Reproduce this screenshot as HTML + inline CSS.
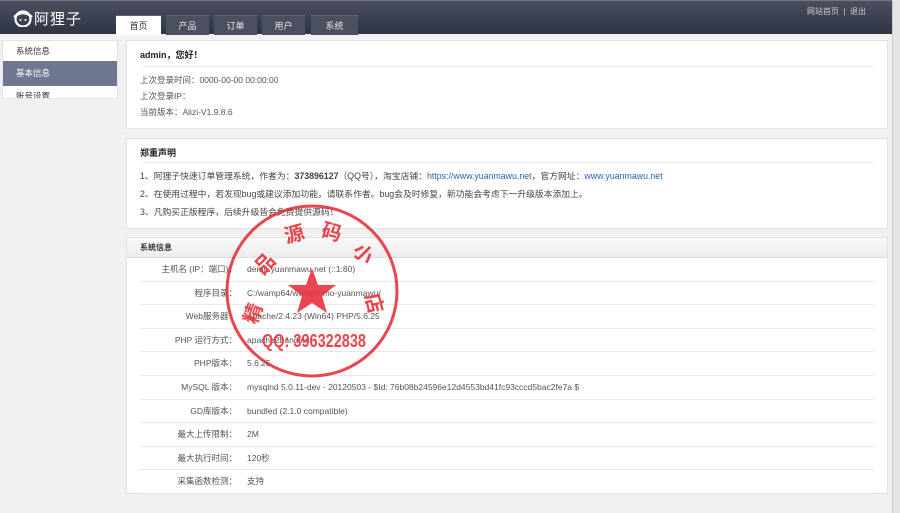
<!DOCTYPE html>
<html><head><meta charset="utf-8"><style>
*{margin:0;padding:0;box-sizing:border-box}
body{width:900px;height:513px;overflow:hidden;background:#f1f1f1;font-family:"Liberation Sans","Noto Sans CJK SC",sans-serif;font-size:8px;color:#444;position:relative}
.hd{position:absolute;left:0;top:0;width:892px;height:34px;background:linear-gradient(#4a5061,#2f3443);border-top:1px solid #777}
.logo{position:absolute;left:12px;top:7px;color:#fff;font-size:15px;letter-spacing:1px}
.tab{position:absolute;top:14px;height:20px;background:#4a5060;color:#e8e8e8;font-size:9px;text-align:center;line-height:20px;border-top:1px solid #666}
.tab.on{background:#fff;color:#333}
.tr{position:absolute;right:26px;top:5px;color:#ccc;font-size:8px}
.sb{position:absolute;right:0;top:0;width:8px;height:513px;background:#e4e4e4;border-left:1px solid #ccc}
.side{position:absolute;left:2px;top:40px;width:116px;height:59px;background:#fff;overflow:hidden;border:1px solid #e4e4e4}
.side div{height:20px;line-height:20px;padding-left:13px;font-size:8.5px;color:#333}
.side .on{background:#6f7890;color:#fff;height:25px;line-height:25px}
.box{position:absolute;left:126px;width:762px;background:#fff;border:1px solid #e2e2e2}
.t{font-weight:bold;font-size:9px;color:#222;margin:0 13px;border-bottom:1px solid #eee;height:26px;line-height:28px}
.p{padding:0 13px;line-height:16px;font-size:8.5px;color:#555}
.p2{padding:0 13px;line-height:18px;font-size:8.8px;color:#444}
a{color:#2a64b8;text-decoration:none}
.sh{height:20px;line-height:20px;padding-left:13px;font-weight:bold;font-size:8px;color:#333;background:linear-gradient(#fafafa,#ececec);border-bottom:1px solid #ddd}
.row{height:23.6px;line-height:23px;margin:0 13px;border-bottom:1px solid #e8e8e8;position:relative;font-size:8.5px;color:#555}
.row .l{position:absolute;left:0;width:97px;text-align:right}
.row .v{position:absolute;left:107px;white-space:nowrap}
</style></head><body>
<div class="hd">
<div class="logo"><svg width="22" height="18" viewBox="0 0 22 18" style="vertical-align:-3px"><circle cx="11" cy="10" r="7.5" fill="none" stroke="#fff" stroke-width="2.2"/><path d="M2 8 Q11 0 20 8" fill="none" stroke="#fff" stroke-width="2.4"/><circle cx="8.5" cy="11" r="1" fill="#fff"/><circle cx="13.5" cy="11" r="1" fill="#fff"/></svg>阿狸子</div>
<div class="tab on" style="left:116px;width:45px">首页</div>
<div class="tab" style="left:166px;width:43px">产品</div>
<div class="tab" style="left:214px;width:43px">订单</div>
<div class="tab" style="left:262px;width:43px">用户</div>
<div class="tab" style="left:311px;width:47px">系统</div>
<div class="tr">网站首页 &nbsp;|&nbsp; 退出</div>
</div>
<div class="sb"></div>
<div class="side"><div>系统信息</div><div class="on">基本信息</div><div>账号设置</div></div>
<div class="box" style="top:40px;height:89px">
<div class="t">admin，您好！</div>
<div class="p" style="padding-top:5px">上次登录时间：0000-00-00 00:00:00<br>上次登录IP：<br>当前版本：Alizi-V1.9.8.6</div>
</div>
<div class="box" style="top:138px;height:91px">
<div class="t" style="height:24px">郑重声明</div>
<div class="p2" style="padding-top:4px">1、阿狸子快速订单管理系统，作者为：<b>373896127</b>（QQ号），淘宝店铺：<a>https://www.yuanmawu.net</a>，官方网址：<a>www.yuanmawu.net</a><br>2、在使用过程中，若发现bug或建议添加功能，请联系作者。bug会及时修复，新功能会考虑下一升级版本添加上。<br>3、凡购买正版程序，后续升级皆会免费提供源码！</div>
</div>
<div class="box" style="top:237px;height:257px">
<div class="sh">系统信息</div>
<div class="row"><span class="l">主机名 (IP：端口)：</span><span class="v">demo.yuanmawu.net (::1:80)</span></div>
<div class="row"><span class="l">程序目录：</span><span class="v">C:/wamp64/www/demo-yuanmawu/</span></div>
<div class="row"><span class="l">Web服务器：</span><span class="v">Apache/2.4.23 (Win64) PHP/5.6.25</span></div>
<div class="row"><span class="l">PHP 运行方式：</span><span class="v">apache2handler</span></div>
<div class="row"><span class="l">PHP版本：</span><span class="v">5.6.25</span></div>
<div class="row"><span class="l">MySQL 版本：</span><span class="v">mysqlnd 5.0.11-dev - 20120503 - $Id: 76b08b24596e12d4553bd41fc93cccd5bac2fe7a $</span></div>
<div class="row"><span class="l">GD库版本：</span><span class="v">bundled (2.1.0 compatible)</span></div>
<div class="row"><span class="l">最大上传限制：</span><span class="v">2M</span></div>
<div class="row"><span class="l">最大执行时间：</span><span class="v">120秒</span></div>
<div class="row"><span class="l">采集函数检测：</span><span class="v">支持</span></div>
</div>
<svg style="position:absolute;left:222px;top:201px" width="180" height="180" viewBox="0 0 180 180">
<circle cx="90" cy="90" r="85" fill="none" stroke="#e8323c" stroke-width="3" opacity=".9"/>
<polygon points="90,67 96,84 114,84 100,95 105,112 90,102 75,112 80,95 66,84 84,84" fill="#e8323c" opacity=".9"/>
<g fill="#e8323c" opacity=".9" font-family="Noto Sans CJK SC,sans-serif" font-weight="bold" font-size="20">
<text x="20" y="120" transform="rotate(-70 30 112)">精</text>
<text x="32" y="70" transform="rotate(-45 42 62)">品</text>
<text x="62" y="40" transform="rotate(-15 72 32)">源</text>
<text x="100" y="38" transform="rotate(15 110 30)">码</text>
<text x="132" y="60" transform="rotate(45 142 52)">小</text>
<text x="143" y="110" transform="rotate(75 153 102)">店</text>
<text x="40" y="146" font-size="18" font-family="Liberation Sans,sans-serif" transform="scale(1,1)" textLength="104" lengthAdjust="spacingAndGlyphs">QQ: 396322838</text>
</g></svg>
</body></html>
